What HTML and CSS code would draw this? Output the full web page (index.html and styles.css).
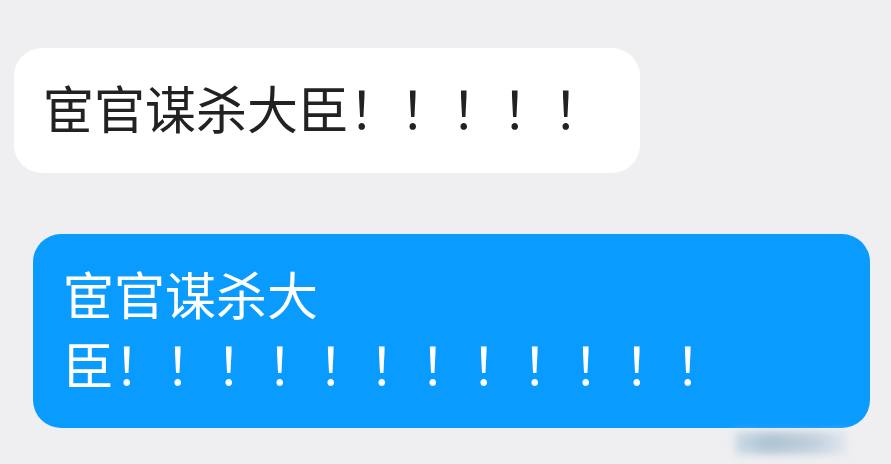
FILE: index.html
```html
<!DOCTYPE html>
<html lang="zh">
<head>
    <meta charset="UTF-8">
    <meta name="viewport" content="width=device-width, initial-scale=1.0">
    <title>聊天</title>
    <link rel="stylesheet" href="styles.css">
</head>
<body>
    <div class="chat">
        <!-- 对方消息 -->
        <div class="bubble bubble-in">宦官谋杀大臣！！！！！</div>

        <!-- 自己的消息 -->
        <div class="bubble bubble-out">宦官谋杀大<br>臣！！！！！！！！！！！！</div>

        <div class="mark-row">
            <div class="mark"></div>
        </div>
    </div>
</body>
</html>
```

FILE: styles.css
```css
body {
    margin: 0;
    padding: 0;
    background-color: #efeff1;
    font-family: "Noto Sans CJK SC", "Noto Sans", sans-serif;
    overflow: hidden;
}
.chat {
    display: flex;
    flex-direction: column;
    align-items: flex-start;
    padding-top: 48px;
    height: 416px;
}
.bubble {
    font-size: 51px;
    border-radius: 28px;
    white-space: nowrap;
}
.bubble-in {
    background: #ffffff;
    color: #222222;
    line-height: 68px;
    margin-left: 14px;
    padding: 25px 36px 32px 29px;
}
.bubble-out {
    background: #0a9bff;
    color: #ffffff;
    line-height: 70px;
    margin-top: 61px;
    margin-left: 33px;
    width: 775px;
    padding: 24px 32px 30px 30px;
}
.mark-row {
    align-self: stretch;
    display: flex;
    justify-content: flex-end;
    padding-right: 44px;
    margin-top: 4px;
}
.mark {
    width: 112px;
    height: 22px;
    background: linear-gradient(to right, #c4d6e4, #9fb9cc 30%, #b5c8d8 70%, #dde6ee);
    filter: blur(4px);
    opacity: 0.8;
}
```
